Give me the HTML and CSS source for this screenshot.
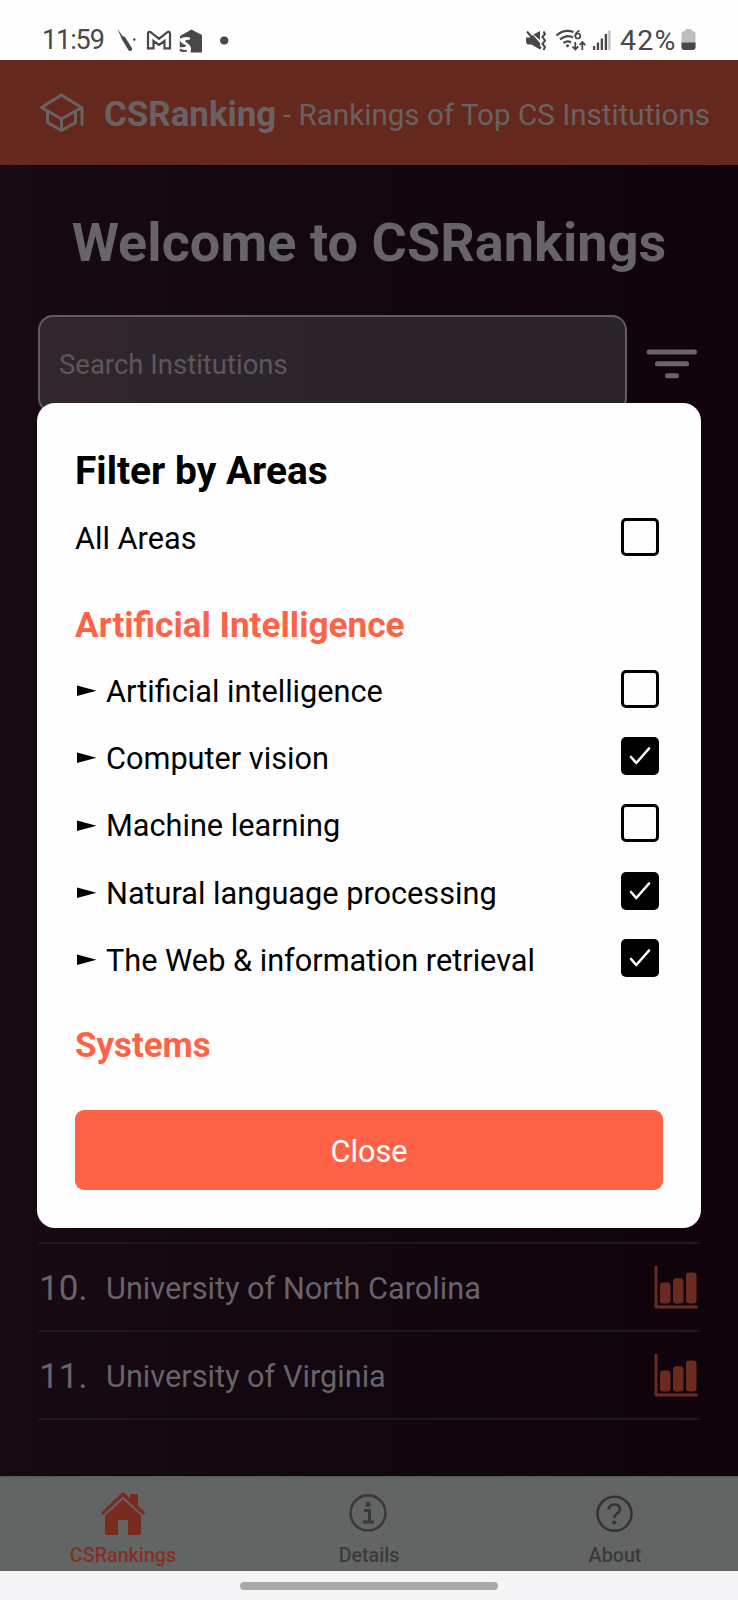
FILE: index.html
```html
<!DOCTYPE html>
<html lang="en">
<head>
<meta charset="utf-8">
<title>CSRanking</title>
<link rel="stylesheet" href="styles.css">
</head>
<body>
<div class="phone">
  <div class="status">
    <span class="clock">11:59</span>
    <svg class="status-left" width="130" height="30" viewBox="110 25 130 30" fill="#484848">
      <path d="M117.5 29L122.500 36L125 37L132.200 48.500Q132 51.500 129 51L122 39.500Z"/>
      <circle cx="134.300" cy="39.500" r="1.200"/>
      <path d="M150.800 48.300H148V33.400Q148.400 31.300 150.400 32L159 38.800L167.600 32Q169.600 31.300 170 33.400V48.300H164.500V41L159 45L153.500 41V48.300Z" fill="none" stroke="#484848" stroke-width="2.200"/>
      <path d="M180 36L191.500 29.500L202 35V52.500H190.500Q192.500 46 187 43L185 41Q186 39.500 190 39.500V37.500Q184.500 36 180 38.500ZM179.800 40Q181 43.500 186.500 45.500Q184 48.200 180 47V48.800Q184 50.500 187 50V51.500Q183 52.500 179.800 51.300Z"/>
      <circle cx="224.200" cy="40.500" r="4.100"/>
    </svg>
    <svg class="status-right" width="88" height="30" viewBox="524 25 88 30" fill="#484848">
      <path d="M526 37.500H530L533 35L540 43V49.500L531.500 44.500H528Q526 44 526 40ZM533.500 34.500L540 31V40Z"/>
      <path d="M527 31.500L541 48.500" stroke="#484848" stroke-width="2" fill="none"/>
      <path d="M543.500 31.500L545 34L542.500 37L545 40.500L542.500 44L545 47L543.500 50" stroke="#484848" stroke-width="2" fill="none"/>
      <g fill="none" stroke="#484848" stroke-width="2.200"><path d="M556.500 35.500Q564 28.500 573.500 32"/><path d="M560 39.500Q567 34 573 37.500"/><path d="M563.500 43Q567.500 40 571 42.500"/></g>
      <circle cx="567.500" cy="45.800" r="1.500"/>
      <path d="M579.500 30.500Q575.500 32.500 575.300 36" stroke="#484848" stroke-width="1.700" fill="none"/><circle cx="577.800" cy="36" r="2.500" fill="none" stroke="#484848" stroke-width="1.700"/>
      <path d="M575.300 42V49M572.500 46.500L575.300 49.500L578.200 46.500M582.300 50V42.500M579.500 45L582.300 42L585.200 45" stroke="#484848" stroke-width="1.800" fill="none"/>
      <path d="M593 46h2.200v4H593zM596.800 42.500h2.300V50h-2.300zM600.700 38.500h2.300V50h-2.300zM604.700 34h2.400v16h-2.400z"/>
      <path d="M608.300 30.500h2.200V50h-2.200z" fill="#bbb"/>
    </svg>
    <span class="battery-text">42%</span>
    <svg class="battery" width="15" height="22" viewBox="0 0 15 22"><path d="M4 2Q4 0 6 0H9Q11 0 11 2Q14.500 2 14.500 5V18Q14.500 21 11.500 21H3.500Q.5 21 .5 18V5Q.5 2 4 2" fill="#bdbdbd"/><path d="M.5 13.500H14.500V18Q14.500 21 11.500 21H3.500Q.5 21 .5 18Z" fill="#484848"/></svg>
  </div>

  <header class="header">
    <svg class="cap" width="46" height="40" viewBox="0 0 46 40" fill="none" stroke="#686263" stroke-width="3" stroke-linejoin="round" stroke-linecap="round"><path d="M2.500 14.500L22.500 2L42.500 14.500L22.500 26ZM8.500 19V29.500L22.500 37.500L36.500 29.500V19M43 15V31.500M22.500 27V36"/></svg>
    <span class="brand">CSRanking</span>
    <span class="tagline">- Rankings of Top CS Institutions</span>
  </header>

  <main class="page">
    <h1 class="welcome">Welcome to CSRankings</h1>
    <div class="search-row">
      <div class="search"><span class="placeholder">Search Institutions</span></div>
      <svg class="filter" width="52" height="30" viewBox="0 0 52 30" stroke="#69656a" stroke-width="5" stroke-linecap="round"><path d="M3.200 3H48.500M11.500 14.800H40.500M21.500 26.800H30.500"/></svg>
    </div>
    <div class="list">
      <div class="uni"><span class="rank">10.</span><span class="uni-name">University of North Carolina</span>
        <svg class="chart" width="44" height="44" viewBox="0 0 44 44"><path d="M2 2V42H42.500" fill="none" stroke="#6b2a20" stroke-width="3" stroke-linecap="round" stroke-linejoin="round"/><g fill="#6b2a20"><rect x="6" y="17.500" width="10.500" height="21" rx="3"/><rect x="19" y="13.300" width="10.500" height="25.200" rx="3"/><rect x="32" y="7.500" width="10.500" height="31" rx="3"/></g></svg></div>
      <div class="uni"><span class="rank">11.</span><span class="uni-name">University of Virginia</span>
        <svg class="chart" width="44" height="44" viewBox="0 0 44 44"><path d="M2 2V42H42.500" fill="none" stroke="#6b2a20" stroke-width="3" stroke-linecap="round" stroke-linejoin="round"/><g fill="#6b2a20"><rect x="6" y="17.500" width="10.500" height="21" rx="3"/><rect x="19" y="13.300" width="10.500" height="25.200" rx="3"/><rect x="32" y="7.500" width="10.500" height="31" rx="3"/></g></svg></div>
    </div>
  </main>

  <nav class="tabs">
    <div class="tab active">
      <svg width="46" height="46" viewBox="0 0 46 46" fill="#7a2b20"><path d="M1 20.500L21.500 1Q23 0 24.500 1L30 6V3Q30 2 31 2H37Q38 2 38 3V13.500L45 20.500L43 23L23 4.500L3 23Z"/><path d="M5 23.500L23 7.500L41 23.500V40.500Q41 43 38.500 43H28V28H18V43H7.500Q5 43 5 40.500Z"/></svg>
      <span>CSRankings</span>
    </div>
    <div class="tab">
      <svg width="46" height="46" viewBox="0 0 46 46" fill="none" stroke="#373838" stroke-width="2.500"><circle cx="22" cy="21" r="17.500"/><circle cx="22" cy="12.500" r="2.500" fill="#373838" stroke="none"/><path d="M18 18.500H23.500V29.500M17 30H28" stroke-width="3"/></svg>
      <span>Details</span>
    </div>
    <div class="tab">
      <svg width="46" height="46" viewBox="0 0 46 46" fill="none" stroke="#333434" stroke-width="2.600"><circle cx="22.500" cy="21.800" r="17"/><path d="M16.500 17.500Q17 12.500 22.500 12.500Q28 12.800 28 17Q28 19.500 25 21.500Q22.200 23.500 22.200 26"/><circle cx="22.100" cy="30.500" r="2" fill="#333434" stroke="none"/></svg>
      <span>About</span>
    </div>
  </nav>
  <div class="gesture"><div class="pill"></div></div>

  <div class="modal">
    <h2 class="title">Filter by Areas</h2>
    <div class="option all"><span class="label">All Areas</span><i class="box"></i></div>
    <h3 class="group">Artificial Intelligence</h3>
    <div class="option"><svg class="arrow" width="20" height="12" viewBox="0 0 20 12"><path d="M0 .5L19.500 5.700L0 11Z"/></svg><span class="label">Artificial intelligence</span><i class="box"></i></div>
    <div class="option"><svg class="arrow" width="20" height="12" viewBox="0 0 20 12"><path d="M0 .5L19.500 5.700L0 11Z"/></svg><span class="label">Computer vision</span><i class="box checked"><svg viewBox="0 0 38 38"><path d="M10 20L15.300 26L28 11.500"/></svg></i></div>
    <div class="option"><svg class="arrow" width="20" height="12" viewBox="0 0 20 12"><path d="M0 .5L19.500 5.700L0 11Z"/></svg><span class="label">Machine learning</span><i class="box"></i></div>
    <div class="option"><svg class="arrow" width="20" height="12" viewBox="0 0 20 12"><path d="M0 .5L19.500 5.700L0 11Z"/></svg><span class="label">Natural language processing</span><i class="box checked"><svg viewBox="0 0 38 38"><path d="M10 20L15.300 26L28 11.500"/></svg></i></div>
    <div class="option"><svg class="arrow" width="20" height="12" viewBox="0 0 20 12"><path d="M0 .5L19.500 5.700L0 11Z"/></svg><span class="label">The Web &amp; information retrieval</span><i class="box checked"><svg viewBox="0 0 38 38"><path d="M10 20L15.300 26L28 11.500"/></svg></i></div>
    <h3 class="group last">Systems</h3>
    <button class="close">Close</button>
  </div>
</div>
</body>
</html>
```
FILE: styles.css
```css
* { box-sizing: border-box; }
body { margin: 0; font-family: Roboto, sans-serif; }
h1, h2, h3 { margin: 0; font-weight: 700; }
svg { flex: none; display: block; }

.phone { position: relative; width: 738px; height: 1600px; display: flex; flex-direction: column; overflow: hidden; white-space: nowrap; }

.status { height: 60px; background: #fefefe; color: #484848; display: flex; align-items: flex-start; padding: 25px 0 0 42px; font-size: 27px; line-height: 31px; }
.clock { width: 68px; letter-spacing: -1.1px; }
.status-right { margin-left: 284px; }
.battery-text { margin-left: 8px; width: 59px; font-size: 28.500px; letter-spacing: 1.200px; }
.battery { margin: 4px 0 0 2px; }

.header { height: 105px; background: #65281d; color: #686263; display: flex; align-items: center; padding: 4px 0 0 39px; }
.cap { margin-top: -4px; }
.brand { font-weight: 700; font-size: 34.900px; width: 179px; margin-left: 19px; }
.tagline { font-size: 29.600px; }

.page { height: 1311px; background: linear-gradient(90deg, #170a12, #12060f 50%, #10030c); display: flex; flex-direction: column; }
.welcome { margin-top: 43px; height: 70px; line-height: 70px; text-align: center; font-size: 54px; letter-spacing: 0.05px; color: #666466; }
.search-row { display: flex; margin: 37px 40px 0 38px; align-items: flex-start; }
.search { width: 589px; height: 98px; border: 2px solid #615c61; border-radius: 15px; background: linear-gradient(90deg, #31262b, #2b242a 40%, #2a2329); padding-left: 19px; display: flex; align-items: center; }
.placeholder { font-size: 27.500px; color: #5c575c; }
.filter { margin: 34px 0 0 19px; }
.list { margin: 829px 38px 0; border-top: 2px solid #1f171e; }
.uni { height: 88px; border-bottom: 2px solid #1f171e; display: flex; align-items: center; color: #67636a; }
.rank { width: 68px; font-size: 35px; padding: 2px 0 0 1px; }
.uni-name { flex: 1; font-size: 30.700px; padding-top: 2px; }
.chart { margin-right: 2px; }

.tabs { height: 95px; background: #636564; border-top: 1px solid #555; display: flex; }
.tab { flex: 1; display: flex; flex-direction: column; align-items: center; padding-top: 15px; color: #3a3b3b; font-size: 19.700px; font-weight: 500; }
.tab span { line-height: 24px; margin-top: 6px; }
.tab.active { color: #872e22; }
.gesture { flex: 1; background: #f5f5f8; display: flex; justify-content: center; padding-top: 11px; }
.pill { width: 258px; height: 8px; border-radius: 4px; background: #a9a9a9; }

.modal { position: absolute; left: 37px; top: 403px; width: 664px; height: 825px; border-radius: 18px; background: #fefefe; padding: 38px 38px 38px; display: flex; flex-direction: column; color: #000; }
.title { font-size: 38.900px; height: 59px; line-height: 59px; }
.option { height: 67.300px; display: flex; align-items: center; font-size: 30.700px; }
.option.all { height: 78px; }
.option.all .label { margin-top: -2px; }
.arrow { margin: 1px 9px 0 2px; }
.label { flex: 1; padding-top: 1px; }
.box { width: 38px; height: 38px; border: 3px solid #000; border-radius: 5px; margin: 0 4px 4px 0; flex: none; }
.box.checked { border: 0; background: #000; }
.box svg { fill: none; stroke: #fff; stroke-width: 2.600; stroke-linecap: round; stroke-linejoin: round; }
.group { font-size: 35.200px; height: 79px; line-height: 94px; color: #ff6347; }
.group.last { font-size: 34.900px; height: 80px; line-height: 105px; }
.close { margin-top: auto; width: 588px; height: 80px; border: 0; border-radius: 9px; background: #ff6347; color: #fff; font: 400 30.700px Roboto, sans-serif; padding: 3px 0 0; }
```
